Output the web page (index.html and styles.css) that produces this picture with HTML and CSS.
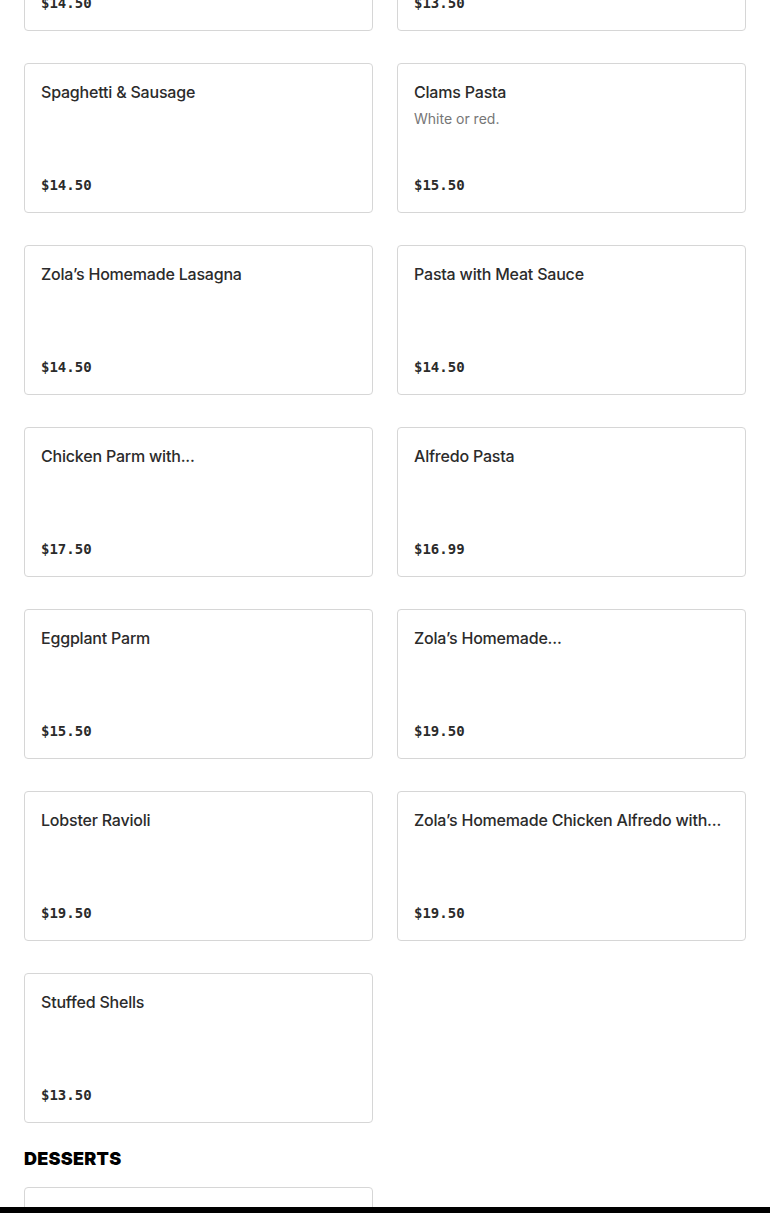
FILE: index.html
```html
<!DOCTYPE html>
<html lang="en">
<head>
<meta charset="utf-8">
<link rel="stylesheet" href="styles.css">
</head>
<body>
<main class="menu">
  <section class="section section-shifted">
    <div class="grid">
      <div class="card"><div class="card-body"><h3 class="title">Spaghetti &amp; Meatballs</h3></div><div class="price">$14.50</div></div>
      <div class="card"><div class="card-body"><h3 class="title">Baked Ziti</h3></div><div class="price">$13.50</div></div>
      <div class="card"><div class="card-body"><h3 class="title">Spaghetti &amp; Sausage</h3></div><div class="price">$14.50</div></div>
      <div class="card"><div class="card-body"><h3 class="title">Clams Pasta</h3><p class="desc">White or red.</p></div><div class="price">$15.50</div></div>
      <div class="card"><div class="card-body"><h3 class="title">Zola’s Homemade Lasagna</h3></div><div class="price">$14.50</div></div>
      <div class="card"><div class="card-body"><h3 class="title">Pasta with Meat Sauce</h3></div><div class="price">$14.50</div></div>
      <div class="card"><div class="card-body"><h3 class="title">Chicken Parm with...</h3></div><div class="price">$17.50</div></div>
      <div class="card"><div class="card-body"><h3 class="title">Alfredo Pasta</h3></div><div class="price">$16.99</div></div>
      <div class="card"><div class="card-body"><h3 class="title">Eggplant Parm</h3></div><div class="price">$15.50</div></div>
      <div class="card"><div class="card-body"><h3 class="title">Zola’s Homemade...</h3></div><div class="price">$19.50</div></div>
      <div class="card"><div class="card-body"><h3 class="title">Lobster Ravioli</h3></div><div class="price">$19.50</div></div>
      <div class="card"><div class="card-body"><h3 class="title">Zola’s Homemade Chicken Alfredo with...</h3></div><div class="price">$19.50</div></div>
      <div class="card"><div class="card-body"><h3 class="title">Stuffed Shells</h3></div><div class="price">$13.50</div></div>
    </div>
  </section>
  <section class="section">
    <h2 class="section-title">DESSERTS</h2>
    <div class="grid">
      <div class="card"><div class="card-body"><h3 class="title">Cannoli</h3></div><div class="price">$5.00</div></div>
    </div>
  </section>
</main>
<div class="bottom-bar"></div>
</body>
</html>
```

FILE: styles.css
```css
html, body {
  margin: 0;
  padding: 0;
  background: #ffffff;
}

body {
  font-family: Inter, "Noto Sans", "Liberation Sans", sans-serif;
  color: #2b2b2b;
}

.menu {
  padding: 0 24px;
}

.section-shifted {
  margin-top: -119px;
}

.grid {
  display: grid;
  grid-template-columns: 1fr 1fr;
  column-gap: 24px;
  row-gap: 32px;
}

.card {
  box-sizing: border-box;
  height: 150px;
  border: 1px solid #d6d6d6;
  border-radius: 4px;
  padding: 16px 16px 17px;
  display: flex;
  flex-direction: column;
  justify-content: space-between;
  background: #fff;
}

.card-body {
  min-width: 0;
}

.title {
  margin: 0;
  font-size: 16px;
  line-height: 24px;
  font-weight: 500;
  color: #2b2b2b;
  letter-spacing: -0.2px;
  white-space: nowrap;
  overflow: hidden;
  text-overflow: ellipsis;
}

.desc {
  margin: 5px 0 0;
  font-size: 14px;
  line-height: 20px;
  color: #767676;
}

.price {
  font-family: "DejaVu Sans Mono", "Liberation Mono", monospace;
  font-size: 14px;
  line-height: 20px;
  font-weight: 700;
  color: #2b2b2b;
}

.section-title {
  margin: 22px 0 14px;
  font-family: Inter, "Liberation Sans", sans-serif;
  font-size: 18px;
  line-height: 28px;
  font-weight: 900;
  letter-spacing: 0.25px;
  color: #000;
}

.bottom-bar {
  position: fixed;
  left: 0;
  right: 0;
  bottom: 0;
  height: 6px;
  background: #000;
}
```
